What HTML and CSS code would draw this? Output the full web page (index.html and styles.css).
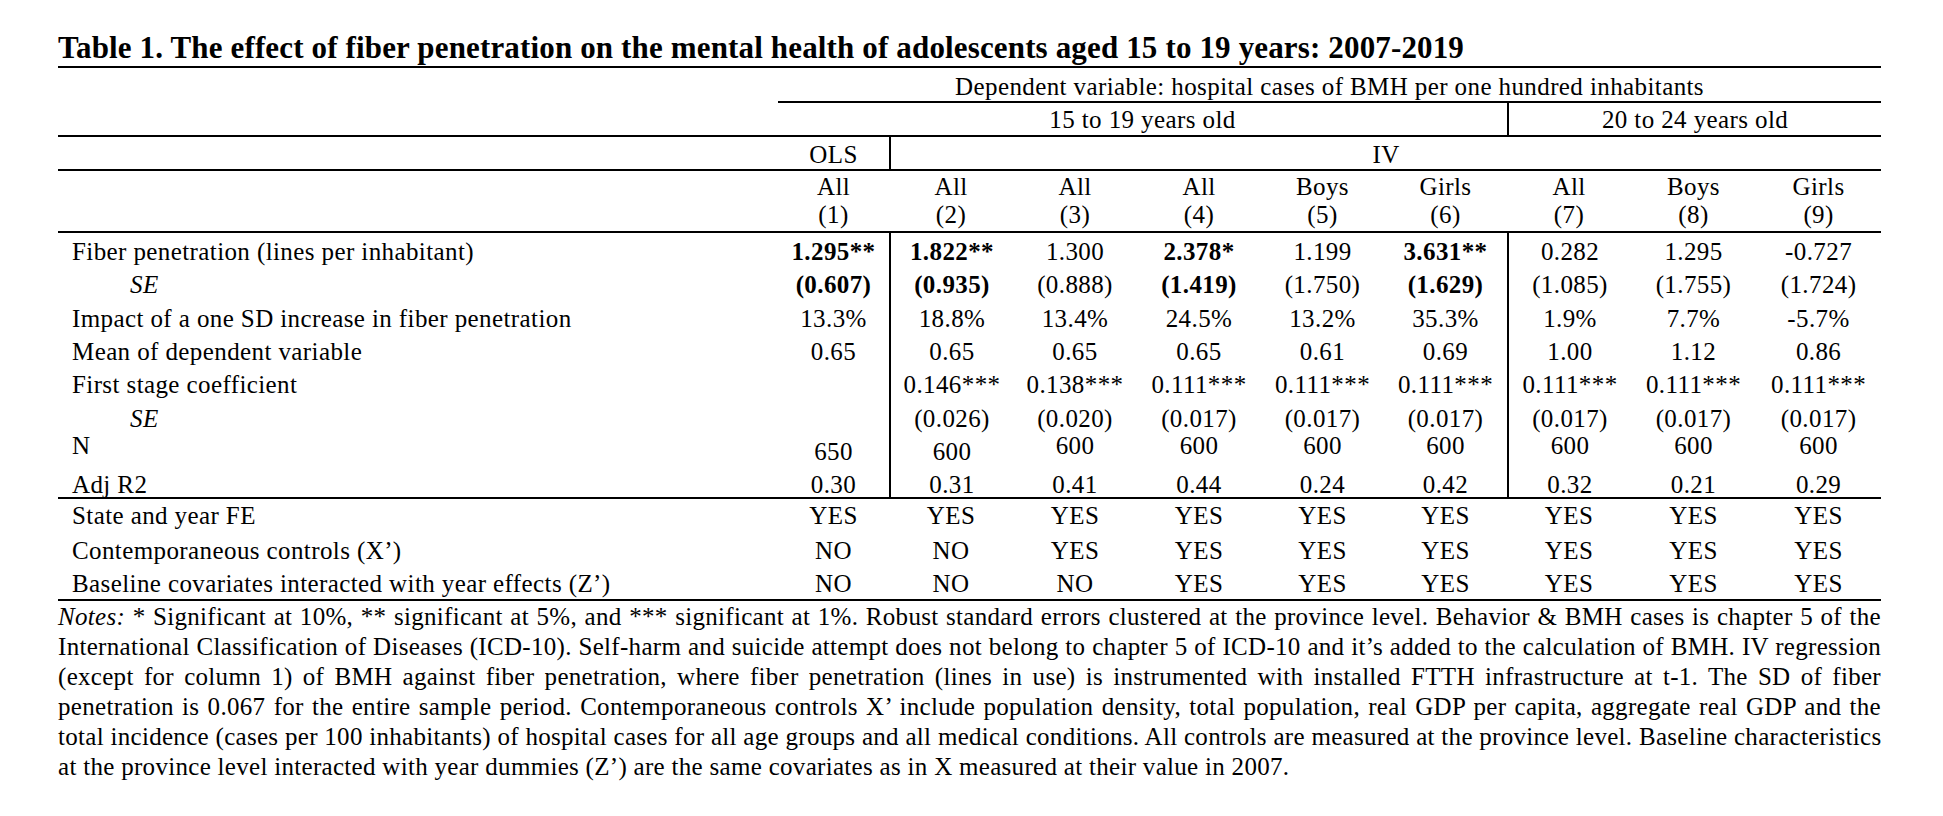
FILE: index.html
```html
<!DOCTYPE html>
<html lang="en">
<head>
<meta charset="utf-8">
<title>Table 1</title>
<link rel="stylesheet" href="styles.css">
</head>
<body>
<div class="page">
  <div class="title">Table 1. The effect of fiber penetration on the mental health of adolescents aged 15 to 19 years: 2007-2019</div>
  <table class="tbl">
    <colgroup>
      <col class="c-label">
      <col class="c1">
      <col class="c124"><col class="c124"><col class="c124">
      <col class="c123"><col class="c123">
      <col class="c124">
      <col class="c125"><col class="c125">
    </colgroup>
    <tr class="r-a">
      <td></td>
      <td colspan="9" class="rule">Dependent variable: hospital cases of BMH per one hundred inhabitants</td>
    </tr>
    <tr class="r-b">
      <td class="rule"></td>
      <td colspan="6" class="rule">15 to 19 years old</td>
      <td colspan="3" class="rule vl">20 to 24 years old</td>
    </tr>
    <tr class="r-c">
      <td class="rule"></td>
      <td class="rule">OLS</td>
      <td colspan="8" class="rule vl">IV</td>
    </tr>
    <tr class="r-d">
      <td></td>
      <td>All</td><td>All</td><td>All</td><td>All</td><td>Boys</td><td>Girls</td><td>All</td><td>Boys</td><td>Girls</td>
    </tr>
    <tr class="r-e">
      <td class="rule"></td>
      <td class="rule">(1)</td><td class="rule">(2)</td><td class="rule">(3)</td><td class="rule">(4)</td><td class="rule">(5)</td><td class="rule">(6)</td><td class="rule">(7)</td><td class="rule">(8)</td><td class="rule">(9)</td>
    </tr>
    <tr class="r-b1">
      <td class="lbl">Fiber penetration (lines per inhabitant)</td>
      <td class="b">1.295**</td><td class="vl b">1.822**</td><td>1.300</td><td class="b">2.378*</td><td>1.199</td><td class="b">3.631**</td><td class="vl">0.282</td><td>1.295</td><td>-0.727</td>
    </tr>
    <tr class="r-b2">
      <td class="lbl se">SE</td>
      <td class="b">(0.607)</td><td class="vl b">(0.935)</td><td>(0.888)</td><td class="b">(1.419)</td><td>(1.750)</td><td class="b">(1.629)</td><td class="vl">(1.085)</td><td>(1.755)</td><td>(1.724)</td>
    </tr>
    <tr class="r-b3">
      <td class="lbl">Impact of a one SD increase in fiber penetration</td>
      <td>13.3%</td><td class="vl">18.8%</td><td>13.4%</td><td>24.5%</td><td>13.2%</td><td>35.3%</td><td class="vl">1.9%</td><td>7.7%</td><td>-5.7%</td>
    </tr>
    <tr class="r-b4">
      <td class="lbl">Mean of dependent variable</td>
      <td>0.65</td><td class="vl">0.65</td><td>0.65</td><td>0.65</td><td>0.61</td><td>0.69</td><td class="vl">1.00</td><td>1.12</td><td>0.86</td>
    </tr>
    <tr class="r-b5">
      <td class="lbl">First stage coefficient</td>
      <td></td><td class="vl">0.146***</td><td>0.138***</td><td>0.111***</td><td>0.111***</td><td>0.111***</td><td class="vl">0.111***</td><td>0.111***</td><td>0.111***</td>
    </tr>
    <tr class="r-b6">
      <td class="lbl se">SE</td>
      <td></td><td class="vl">(0.026)</td><td>(0.020)</td><td>(0.017)</td><td>(0.017)</td><td>(0.017)</td><td class="vl">(0.017)</td><td>(0.017)</td><td>(0.017)</td>
    </tr>
    <tr class="r-b7">
      <td class="lbl">N</td>
      <td class="low">650</td><td class="vl low">600</td><td>600</td><td>600</td><td>600</td><td>600</td><td class="vl">600</td><td>600</td><td>600</td>
    </tr>
    <tr class="r-b8">
      <td class="lbl rule">Adj R2</td>
      <td class="rule">0.30</td><td class="vl rule">0.31</td><td class="rule">0.41</td><td class="rule">0.44</td><td class="rule">0.24</td><td class="rule">0.42</td><td class="vl rule">0.32</td><td class="rule">0.21</td><td class="rule">0.29</td>
    </tr>
    <tr class="r-f1">
      <td class="lbl">State and year FE</td>
      <td class="low2">YES</td><td>YES</td><td>YES</td><td>YES</td><td>YES</td><td>YES</td><td>YES</td><td>YES</td><td>YES</td>
    </tr>
    <tr class="r-f2">
      <td class="lbl">Contemporaneous controls (X’)</td>
      <td>NO</td><td>NO</td><td>YES</td><td>YES</td><td>YES</td><td>YES</td><td>YES</td><td>YES</td><td>YES</td>
    </tr>
    <tr class="r-f3">
      <td class="lbl rule">Baseline covariates interacted with year effects (Z’)</td>
      <td class="rule">NO</td><td class="rule">NO</td><td class="rule">NO</td><td class="rule">YES</td><td class="rule">YES</td><td class="rule">YES</td><td class="rule">YES</td><td class="rule">YES</td><td class="rule">YES</td>
    </tr>
  </table>
  <div class="notes">
    <span class="nl"><i>Notes:</i> * Significant at 10%, ** significant at 5%, and *** significant at 1%. Robust standard errors clustered at the province level. Behavior &amp; BMH cases is chapter 5 of the</span>
    <span class="nl">International Classification of Diseases (ICD-10). Self-harm and suicide attempt does not belong to chapter 5 of ICD-10 and it’s added to the calculation of BMH. IV regression</span>
    <span class="nl">(except for column 1) of BMH against fiber penetration, where fiber penetration (lines in use) is instrumented with installed FTTH infrastructure at t-1. The SD of fiber</span>
    <span class="nl">penetration is 0.067 for the entire sample period. Contemporaneous controls X’ include population density, total population, real GDP per capita, aggregate real GDP and the</span>
    <span class="nl">total incidence (cases per 100 inhabitants) of hospital cases for all age groups and all medical conditions. All controls are measured at the province level. Baseline characteristics</span>
    <span class="nl last">at the province level interacted with year dummies (Z’) are the same covariates as in X measured at their value in 2007.</span>
  </div>
</div>
</body>
</html>
```

FILE: styles.css
```css
html, body {
  margin: 0;
  padding: 0;
  background: #ffffff;
}

body {
  font-family: "Liberation Serif", "Times New Roman", serif;
  color: #000000;
}

.page {
  width: 1823px;
  padding: 33px 0 0 58px;
}

.title {
  font-size: 31px;
  letter-spacing: 0.15px;
  font-weight: bold;
  line-height: 30px;
  padding-bottom: 3px;
  border-bottom: 2px solid #000;
  white-space: nowrap;
}

.tbl {
  width: 1823px;
  table-layout: fixed;
  border-collapse: separate;
  border-spacing: 0;
  font-size: 25px;
  letter-spacing: 0.4px;
  line-height: 24px;
}

.c-label { width: 720px; }
.c1 { width: 111px; }
.c124 { width: 124px; }
.c123 { width: 123px; }
.c125 { width: 125px; }

.tbl td {
  padding: 0;
  text-align: center;
  vertical-align: bottom;
  white-space: nowrap;
}

.tbl td.rule { border-bottom: 2px solid #000; }
.tbl td.vl { border-left: 2px solid #000; }
.tbl td.b { font-weight: bold; }

.tbl td.lbl {
  text-align: left;
  padding-left: 14px;
}

.tbl td.se {
  font-style: italic;
  padding-left: 72px;
}

/* header rows */
.r-a { height: 35px; }
.r-a td { padding-bottom: 2px; }
.r-b { height: 34px; }
.r-b td { padding-bottom: 3px; }
.r-c { height: 34px; }
.r-c td { padding-bottom: 2px; }
.r-d { height: 28px; }
.r-d td { padding-bottom: 0; }
.r-e { height: 34px; }
.r-e td { padding-bottom: 4px; }

/* body rows */
.r-b1 { height: 31px; }
.r-b2 { height: 33px; }
.r-b3 { height: 34px; }
.r-b4 { height: 33px; }
.r-b5 { height: 33px; }
.r-b6 { height: 34px; }
.r-b7 { height: 33px; }
.r-b7 td { padding-bottom: 6px; }
.tbl .r-b7 td.low { padding-bottom: 0; }
.r-b8 { height: 35px; }

/* bottom rows */
.r-f1 { height: 29px; }
.tbl .r-f1 td.low2 { padding-bottom: 0; }
.r-f2 { height: 35px; }
.r-f3 { height: 38px; }
.r-f3 td { padding-bottom: 3px; }

.notes {
  padding-top: 1px;
  font-size: 25px;
  letter-spacing: 0.3px;
  line-height: 30px;
}

.nl {
  display: block;
  white-space: nowrap;
  text-align: justify;
  text-align-last: justify;
}

.nl.last {
  text-align: left;
  text-align-last: left;
}
```
